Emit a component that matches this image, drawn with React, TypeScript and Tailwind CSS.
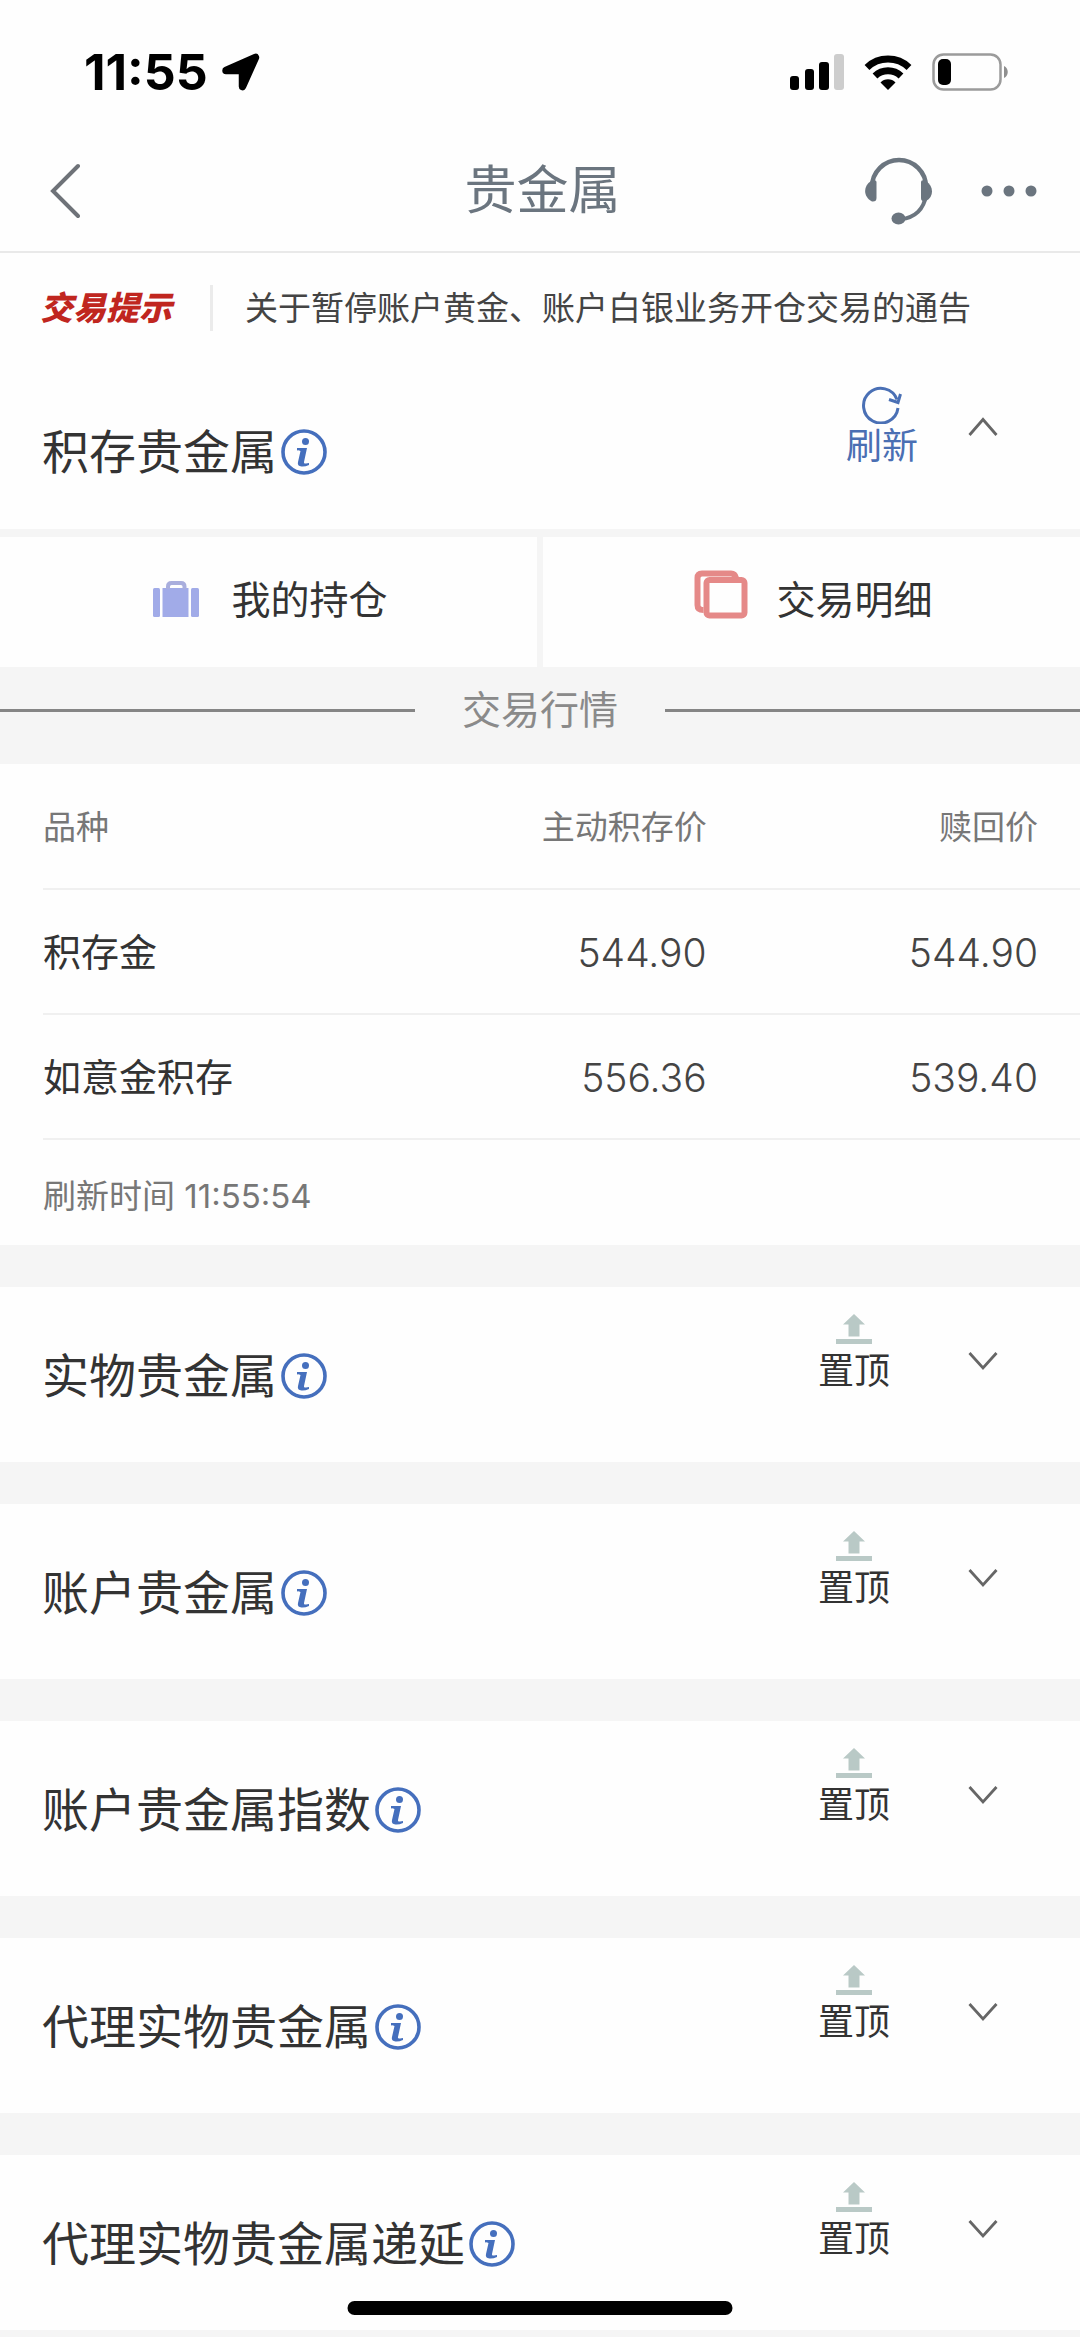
import { useState } from "react";

function LocationArrow() {
  return (
    <svg width="42" height="42" viewBox="0 0 42 42" aria-hidden="true">
      <path
        d="M35.500 6.500 L22.500 35.500 V19.500 H6 Z"
        fill="#000"
        stroke="#000"
        strokeWidth="7.500"
        strokeLinejoin="round"
      />
    </svg>
  );
}

function SignalIcon() {
  return (
    <svg width="54" height="36" viewBox="0 0 54 36" aria-hidden="true">
      <rect x="0" y="22" width="9" height="14" rx="3" />
      <rect x="15" y="15" width="9" height="21" rx="3" />
      <rect x="29" y="8" width="10" height="28" rx="3" />
      <rect x="44" y="0" width="10" height="36" rx="3" fill="#cdcdcd" />
    </svg>
  );
}

function WifiIcon() {
  return (
    <svg width="48" height="36" viewBox="0 0 48 36" aria-hidden="true">
      <g fill="none" stroke="#000" strokeWidth="7">
        <path d="M3 13.5 A30.5 30.5 0 0 1 45 13.5" />
        <path d="M11 22 A19 19 0 0 1 37 22" />
      </g>
      <path d="M24 36 L16.5 28.5 A10.5 10.5 0 0 1 31.5 28.5 Z" />
    </svg>
  );
}

function BatteryIcon() {
  return (
    <svg width="77" height="38" viewBox="0 0 77 38" aria-hidden="true">
      <rect x="1.5" y="1.5" width="67" height="35" rx="10" fill="none" stroke="#9b9b9b" strokeWidth="2.500" />
      <rect x="6" y="6" width="13" height="26" rx="5" />
      <path d="M72 13 C77 15 77 23 72 25 Z" fill="#8f8f8f" />
    </svg>
  );
}

function HeadsetIcon() {
  return (
    <svg width="68" height="68" viewBox="0 0 68 68" aria-hidden="true">
      <path d="M7 30 A27 27 0 0 1 61 30" fill="none" stroke="#6b757f" strokeWidth="4.500" />
      <path d="M61 38 C59 52 50 61 36 62" fill="none" stroke="#6b757f" strokeWidth="4" />
      <path d="M11.5 25 V41 Q11.5 45 7 44.500 C-2 40 -2 29 6 24 Q11.500 22 11.500 25 Z" fill="#6b757f" />
      <path d="M56 25 V41 Q56 45 61 44 C69 40 69 29 61 24 Q56 22 56 25 Z" fill="#6b757f" />
      <ellipse cx="33.5" cy="61.5" rx="7" ry="6" fill="#6b757f" />
    </svg>
  );
}

function InfoIcon() {
  return (
    <svg width="46" height="46" viewBox="0 0 46 46" aria-hidden="true">
      <circle cx="23" cy="23" r="21" fill="none" stroke="#456fbd" strokeWidth="3.600" />
      <circle cx="24.5" cy="12.5" r="3.500" fill="#456fbd" />
      <path
        d="M16 19 H26 L23 33 Q22.500 35 25 34.500 L28 34 V36 Q24 37.800 20.500 37.500 Q16 37 17 33 L19.500 22 Q17.500 21 16 21.500 Z"
        fill="#456fbd"
      />
    </svg>
  );
}

function RefreshIcon() {
  return (
    <svg width="40" height="38" viewBox="0 0 40 38" fill="none" stroke="#4a70b5" strokeWidth="3" aria-hidden="true">
      <path d="M36 22 A17.3 17.3 0 1 1 35 13.5" />
      <path d="M27 13.5 L36 16.5 L38.5 8" />
    </svg>
  );
}

function PinTopIcon() {
  return (
    <svg width="36" height="31" viewBox="0 0 36 31" fill="#b9c9c6" aria-hidden="true">
      <path d="M18 0 L29 10.500 H23.500 V22.500 H12.500 V10.500 H7 Z" />
      <rect x="0" y="25" width="36" height="5" />
    </svg>
  );
}

function Chevron({ up = false }: { up?: boolean }) {
  return (
    <svg width="30" height="20" viewBox="0 0 30 20" fill="none" stroke="#666" strokeWidth="2.800" aria-hidden="true">
      <path d={up ? "M1.500 18 L15 2.500 L28.500 18" : "M1.500 2 L15 17 L28.500 2"} />
    </svg>
  );
}

function SuitcaseIcon() {
  return (
    <svg width="46" height="42" viewBox="0 0 46 42" fill="#a1abe8" aria-hidden="true">
      <rect x="0" y="9" width="7" height="29" rx="1.5" />
      <rect x="9.5" y="9" width="26" height="29" />
      <rect x="38" y="9" width="8" height="29" rx="1.5" />
      <path d="M15 10 V7.500 Q15 4 18.500 4 H28 Q31.500 4 31.500 7.500 V10" fill="none" stroke="#a9aedd" strokeWidth="4" />
    </svg>
  );
}

function CardsIcon() {
  return (
    <svg width="54" height="60" viewBox="0 0 54 60" fill="none" stroke="#e58988" strokeWidth="6" aria-hidden="true">
      <path d="M42 8 Q41 3.500 37 3.500 H8 Q3.500 3.500 3.500 8 V35 Q3.500 40 9.500 40" />
      <rect x="12.5" y="10" width="38" height="35.5" rx="3" />
    </svg>
  );
}

const quotes = [
  { name: "积存金", buy: "544.90", sell: "544.90" },
  { name: "如意金积存", buy: "556.36", sell: "539.40" },
];

const sections = ["实物贵金属", "账户贵金属", "账户贵金属指数", "代理实物贵金属", "代理实物贵金属递延"];

function SectionTitle({ title }: { title: string }) {
  return (
    <div className="flex flex-1 items-center gap-1 pt-[61px] pb-[58px] pl-[42px]">
      <h2 className="text-[47px] leading-[56px] text-[#333]">{title}</h2>
      <button type="button" aria-label={`${title}说明`}>
        <InfoIcon />
      </button>
    </div>
  );
}

function Section({ title }: { title: string }) {
  const [open, setOpen] = useState(false);
  return (
    <section className="flex items-start bg-[#fefefe] pr-[62px]">
      <SectionTitle title={title} />
      <button type="button" className="mr-[58px] flex flex-col items-center gap-1 pt-[27px] text-[36px] leading-[44px] text-[#333]">
        <PinTopIcon />
        置顶
      </button>
      <button
        type="button"
        aria-label={title}
        aria-expanded={open}
        onClick={() => setOpen(!open)}
        className="flex w-[70px] justify-center pt-[64px]"
      >
        <Chevron up={open} />
      </button>
    </section>
  );
}

export default function App() {
  return (
    <div className="min-h-screen bg-[#f5f5f5] font-['Inter','Noto_Sans_CJK_SC',sans-serif] text-[#333]">
      <div className="bg-[#fefefe]">
        <div className="flex items-center justify-between pt-[44px] pr-[71px] pl-[84px]">
          <div className="flex items-center gap-3 text-[50px] leading-[56px] font-bold text-black">
            11:55
            <LocationArrow />
          </div>
          <div className="flex items-center gap-5">
            <SignalIcon />
            <WifiIcon />
            <BatteryIcon />
          </div>
        </div>
        <header className="mt-[28px] grid grid-cols-3 items-center border-b-2 border-[#e9e9e9] pt-[23px] pr-[43px] pb-[20px] pl-[48px]">
          <button type="button" aria-label="返回" className="w-[60px]">
            <svg width="32" height="56" viewBox="0 0 32 56" fill="none" stroke="#6e7278" strokeWidth="4" strokeLinecap="round" aria-hidden="true">
              <path d="M30 3 L5 28 L30 53" />
            </svg>
          </button>
          <h1 className="text-center text-[52px] leading-[80px] text-[#6b757f]">贵金属</h1>
          <div className="flex items-center justify-end gap-12">
            <button type="button" aria-label="客服">
              <HeadsetIcon />
            </button>
            <button type="button" aria-label="更多">
              <svg width="56" height="12" viewBox="0 0 56 12" fill="#6b757f" aria-hidden="true">
                <circle cx="6" cy="6" r="5.5" />
                <circle cx="28" cy="6" r="5.5" />
                <circle cx="50" cy="6" r="5.5" />
              </svg>
            </button>
          </div>
        </header>
        <div className="flex items-center py-[32px] pl-[40px]">
          <strong className="text-[33px] leading-[46px] font-black text-[#c0261f] italic">交易提示</strong>
          <span className="mr-[32px] ml-[38px] h-[46px] w-[3px] bg-[#ebebeb]" />
          <a href="#notice" className="text-[33px] leading-[46px] whitespace-nowrap text-[#444]">
            关于暂停账户黄金、账户白银业务开仓交易的通告
          </a>
        </div>
      </div>

      <section>
        <div className="flex items-start border-b-8 border-[#f5f5f5] bg-[#fefefe] pr-[62px] [&>div]:pb-[49px]">
          <SectionTitle title="积存贵金属" />
          <button type="button" className="mr-[30px] flex flex-col items-center pt-[23px] text-[36px] leading-[44px] text-[#4a6fb3]">
            <RefreshIcon />
            刷新
          </button>
          <button type="button" aria-label="收起" className="flex w-[70px] justify-center pt-[54px]">
            <Chevron up />
          </button>
        </div>

        <div className="grid grid-cols-2 gap-[6px]">
          <button type="button" className="flex items-center justify-center gap-8 bg-[#fefefe] pt-[33px] pb-[37px] pl-1 text-[39px] leading-[60px]">
            <SuitcaseIcon />
            我的持仓
          </button>
          <button type="button" className="flex items-center justify-center gap-7 bg-[#fefefe] pt-[33px] pb-[37px] pl-1 text-[39px] leading-[60px]">
            <CardsIcon />
            交易明细
          </button>
        </div>

        <div className="flex items-center gap-[47px] pt-[15px] pb-[26px] text-[39px] leading-[56px] text-[#8a8a8a]">
          <span className="h-[3px] flex-1 bg-[#858585]" />
          <h3>交易行情</h3>
          <span className="h-[3px] flex-1 bg-[#858585]" />
        </div>

        <div className="bg-[#fefefe] pl-[43px]">
          <table className="w-full table-fixed border-collapse">
            <thead>
              <tr className="border-b-2 border-[#f0f0f0] text-[33px] leading-[48px] text-[#777]">
                <th scope="col" className="w-[32%] pt-[39px] pb-[37px] text-left font-normal">品种</th>
                <th scope="col" className="w-[32%] pt-[39px] pb-[37px] text-right font-normal">主动积存价</th>
                <th scope="col" className="pt-[39px] pr-[42px] pb-[37px] text-right font-normal">赎回价</th>
              </tr>
            </thead>
            <tbody>
              {quotes.map((q) => (
                <tr key={q.name} className="border-b-2 border-[#f0f0f0] text-[38px] leading-[55px]">
                  <th scope="row" className="pt-[35px] pb-[33px] text-left font-normal">{q.name}</th>
                  <td className="pt-[35px] pb-[33px] text-right text-[39px] font-light text-[#444]">{q.buy}</td>
                  <td className="pt-[35px] pr-[42px] pb-[33px] text-right text-[39px] font-light text-[#444]">{q.sell}</td>
                </tr>
              ))}
            </tbody>
          </table>
          <p className="pt-[32px] pb-[25px] text-[33px] leading-[48px] text-[#777]">刷新时间 11:55:54</p>
        </div>
      </section>

      <div className="flex flex-col gap-[42px] pt-[42px] pb-2">
        {sections.map((title) => (
          <Section key={title} title={title} />
        ))}
      </div>

      <div className="fixed bottom-[22px] left-1/2 h-[14px] w-[385px] -translate-x-1/2 rounded-full bg-black" />
    </div>
  );
}
